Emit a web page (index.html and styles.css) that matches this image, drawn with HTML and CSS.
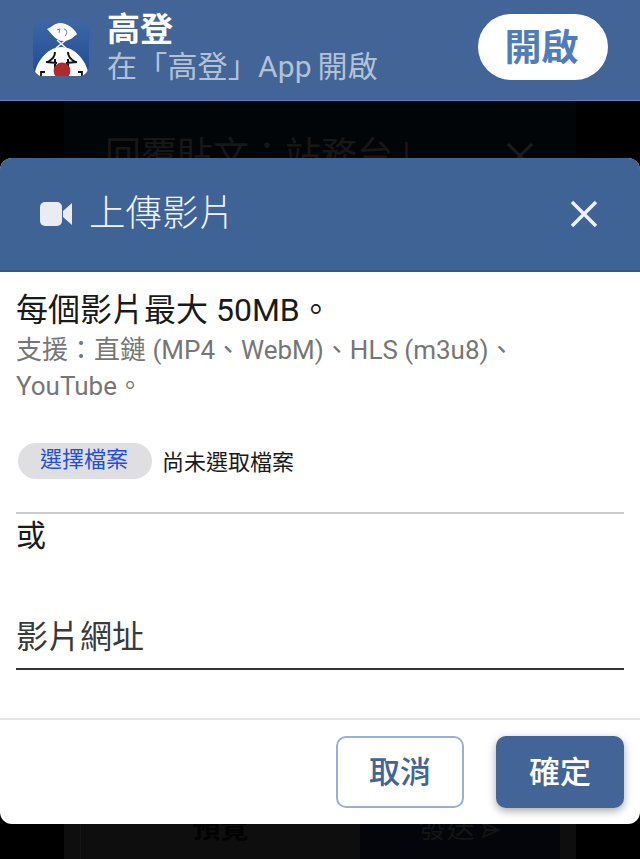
FILE: index.html
```html
<!DOCTYPE html>
<html lang="zh-Hant">
<head>
<meta charset="utf-8">
<title>上傳影片</title>
<link rel="stylesheet" href="styles.css">
</head>
<body>
<header class="banner">
  <svg class="app-icon" viewBox="0 0 56 58" aria-hidden="true">
    <defs>
      <linearGradient id="sky" x1="0" y1="0" x2="0" y2="1">
        <stop offset="0" stop-color="#3f67a6"/>
        <stop offset="1" stop-color="#1f4a94"/>
      </linearGradient>
      <clipPath id="tile"><rect width="56" height="58" rx="12"/></clipPath>
    </defs>
    <g clip-path="url(#tile)">
      <rect width="56" height="58" fill="url(#sky)"/>
      <path d="M14 10 C19 8 22 4 27 4 C34 4 41 9 44 15 C40 19 36 22 30 22 C23 22 19 15 14 10Z" fill="#fff"/>
      <path d="M24 11 L27 10 L26 14 M31 10 C34 11 35 14 32 17" fill="none" stroke="#5f7fae" stroke-width="1"/>
      <path d="M23 29 L33 21 M33 29 L24 21" fill="none" stroke="#fff" stroke-width="1.4"/>
      <path d="M2 58 L2 53 C5 40 16 28 28.5 28 C41 28 52 40 55 53 L55 58Z" fill="#fff"/>
      <path d="M22 33 C22 38 19 40 15 43 M13 43 L24 44 M22 40 L22 50 M35 33 C35 38 38 40 42 43 M44 43 L33 44 M35 40 L35 50" fill="none" stroke="#111" stroke-width="2"/>
      <path d="M8 58 L8 53 L12 53 M49 58 L49 53 L45 53" fill="none" stroke="#111" stroke-width="1.8"/>
      <circle cx="29" cy="52" r="8.4" fill="#b3282b"/>
    </g>
    <rect y="57" width="56" height="1" fill="#426496"/>
  </svg>
  <div class="banner-text">
    <div class="banner-title">高登</div>
    <div class="banner-sub">在「高登」App 開啟</div>
  </div>
  <button class="open-btn">開啟</button>
</header>

<main class="stage">
  <section class="behind">
    <div class="behind-head">
      <span>回覆貼文&#xFF1A;站務台 |</span>
      <svg class="behind-x" viewBox="0 0 28 28" aria-hidden="true"><path d="M2 2 L26 26 M26 2 L2 26" stroke="#1c1c1c" stroke-width="3"/></svg>
    </div>
    <div class="behind-foot">
      <div class="behind-preview">預覽</div>
      <div class="behind-send">發送
        <svg class="behind-plane" viewBox="0 0 20 20" aria-hidden="true"><path d="M2 3 L18 10 L2 17 L5 10Z M5 10 L18 10" fill="none" stroke="#151515" stroke-width="1.8"/></svg>
      </div>
    </div>
  </section>

  <section class="dialog">
    <div class="dialog-head">
      <svg class="video-icon" viewBox="0 0 32 24" aria-hidden="true">
        <rect x="0" y="0" width="22" height="24" rx="5" fill="#e9ecf2"/>
        <path d="M23 9 L32 1 V23 L23 15Z" fill="#e9ecf2"/>
      </svg>
      <h1 class="dialog-title">上傳影片</h1>
      <svg class="close-icon" viewBox="0 0 28 28" aria-hidden="true"><path d="M2 2 L26 26 M26 2 L2 26" stroke="#eef0f4" stroke-width="3.4"/></svg>
    </div>
    <div class="dialog-body">
      <p class="limit">每個影片最大 50MB。</p>
      <p class="support">支援&#xFF1A;直&#x93C8; (MP4、WebM)、HLS (m3u8)、<br>YouTube。</p>
      <div class="file-row">
        <span class="file-btn">選擇檔案</span>
        <span class="file-none">尚未選取檔案</span>
      </div>
      <div class="or">或</div>
      <div class="url-field">影片網址</div>
    </div>
    <div class="dialog-foot">
      <button class="btn btn-cancel">取消</button>
      <button class="btn btn-ok">確定</button>
    </div>
  </section>
</main>
</body>
</html>
```
FILE: styles.css
```css
* { box-sizing: border-box; }
html, body { margin: 0; height: 100%; }
body {
  width: 640px;
  height: 859px;
  overflow: hidden;
  background: #000;
  display: flex;
  flex-direction: column;
  font-family: Roboto, "Noto Sans CJK TC", sans-serif;
}
.banner {
  height: 101px;
  flex: none;
  background: #426496;
  border-bottom: 1px solid #5c82b8;
  display: flex;
  align-items: center;
  padding: 0 32px 0 33px;
}
.app-icon { width: 56px; height: 58px; flex: none; margin-top: -5px; }
.banner-text { margin-left: 18px; flex: 1; }
.banner-title { font-size: 33px; font-weight: 700; line-height: 38px; color: #fff; margin-top: -4px; }
.banner-sub { font-size: 30px; line-height: 36px; color: #b3c1d6; letter-spacing: .2px; word-spacing: -2px; }
.open-btn {
  width: 130px;
  height: 66px;
  margin-top: -7px;
  border: 0;
  border-radius: 33px;
  background: #fff;
  color: #4f7db9;
  font: 700 37px/66px Roboto, "Noto Sans CJK TC", sans-serif;
  padding: 2px 3px 0 0;
}
.stage { flex: 1; position: relative; min-height: 0; }
.behind {
  height: 100%;
  margin: 0 64px;
  display: flex;
  flex-direction: column;
  justify-content: space-between;
  background: #0e0e0e;
}
.behind-head {
  height: 100px;
  background: #020508;
  color: #171717;
  font-size: 36px;
  line-height: 40px;
  padding: 35px 42px 0 41px;
  display: flex;
  justify-content: space-between;
}
.behind-x { width: 28px; height: 28px; margin-top: 6px; }
.behind-foot { height: 64px; display: flex; padding: 0 16px; }
.behind-preview {
  width: 280px;
  text-align: center;
  font-size: 28px;
  font-weight: 700;
  line-height: 64px;
  padding-top: 2px;
  color: #020202;
  border-left: 1px solid #161616;
}
.behind-send {
  width: 200px;
  background: #03050a;
  color: #151515;
  font-size: 28px;
  line-height: 64px;
  padding-top: 2px;
  text-align: center;
}
.behind-plane { width: 20px; height: 20px; vertical-align: -2px; }
.dialog {
  position: absolute;
  top: 57px;
  left: 0;
  right: 0;
  bottom: 35px;
  background: #fff;
  border-radius: 12px;
  overflow: hidden;
  display: flex;
  flex-direction: column;
}
.dialog-head {
  height: 114px;
  flex: none;
  background: #3f6394;
  border-bottom: 2px solid #365680;
  display: flex;
  align-items: center;
  padding: 0 42px 0 40px;
}
.video-icon { width: 32px; height: 24px; flex: none; }
.dialog-title { margin: 0 0 0 17px; flex: 1; font-size: 36.5px; font-weight: 300; line-height: 44px; color: #f0f2f6; }
.close-icon { width: 28px; height: 28px; flex: none; }
.dialog-body { flex: 1; padding: 0 16px; }
.limit { margin: 16px 0 0; font-size: 32px; line-height: 44px; color: #1a1a1a; }
.support { margin: 0; font-size: 26px; line-height: 36px; color: #767676; }
.file-row {
  display: flex;
  align-items: center;
  height: 36px;
  margin-top: 39px;
  padding-left: 2px;
  font-size: 22px;
}
.file-btn {
  width: 134px;
  height: 36px;
  border-radius: 18px;
  background: #dfdfe2;
  color: #1f4fd8;
  text-align: center;
  line-height: 34px;
  padding-right: 2px;
}
.file-none { margin-left: 10px; padding-bottom: 3px; color: #1a1a1a; }
.or {
  margin-top: 33px;
  border-top: 2px solid #cccccc;
  padding-top: 1px;
  font-size: 30px;
  line-height: 42px;
  color: #1a1a1a;
}
.url-field {
  margin-top: 49px;
  height: 64px;
  font-size: 32px;
  line-height: 62px;
  color: #3a3a3a;
  border-bottom: 2px solid #333;
}
.dialog-foot {
  height: 106px;
  flex: none;
  border-top: 2px solid #e4e4e4;
  display: flex;
  justify-content: flex-end;
  gap: 32px;
  padding: 16px 16px 0;
}
.btn {
  width: 128px;
  height: 72px;
  border-radius: 10px;
  font: 500 31px/1 Roboto, "Noto Sans CJK TC", sans-serif;
  padding: 0;
}
.btn-cancel { background: #fff; color: #426496; border: 2px solid #9ab0cf; }
.btn-ok { background: #426496; color: #fff; border: 0; box-shadow: 0 3px 8px rgba(0,0,0,.35); }
```
